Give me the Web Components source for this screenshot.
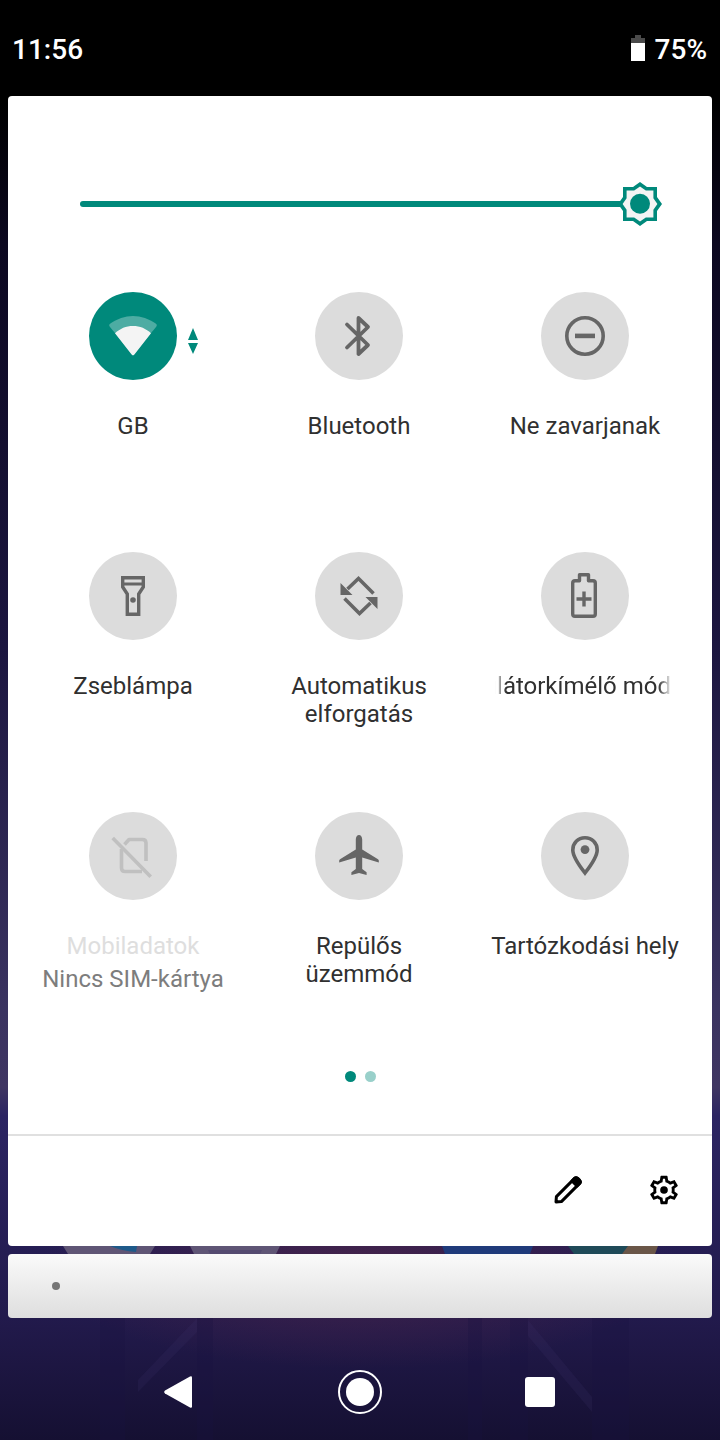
<!DOCTYPE html>
<html>
<head>
<meta charset="utf-8">
<title>Gyorsbeállítások</title>
<style>
html, body { margin: 0; height: 100%; }
body {
  width: 720px;
  height: 1440px;
  overflow: hidden;
  position: relative;
  background: #000;
  font-family: Roboto, "Noto Sans", sans-serif;
}
</style>
</head>
<body>
<qs-wallpaper></qs-wallpaper>
<qs-status time="11:56" level="75%"></qs-status>
<qs-panel>
  <qs-slider></qs-slider>
  <qs-grid>
    <qs-tile active label="GB" icon="wifi"></qs-tile>
    <qs-tile label="Bluetooth" icon="bluetooth"></qs-tile>
    <qs-tile label="Ne zavarjanak" icon="dnd"></qs-tile>
    <qs-tile label="Zseblámpa" icon="torch"></qs-tile>
    <qs-tile label="Automatikus elforgatás" icon="rotate"></qs-tile>
    <qs-tile fade label="Akkumulátorkímélő mód" icon="battery"></qs-tile>
    <qs-tile disabled label="Mobiladatok" sub="Nincs SIM-kártya" icon="nosim"></qs-tile>
    <qs-tile label="Repülős üzemmód" icon="plane"></qs-tile>
    <qs-tile label="Tartózkodási hely" icon="pin"></qs-tile>
  </qs-grid>
  <qs-dots></qs-dots>
  <qs-footer></qs-footer>
</qs-panel>
<qs-notif></qs-notif>
<qs-nav></qs-nav>

<script>
const ICONS = {
  wifi: `<svg width="48" height="48" viewBox="0 0 48 48">
    <path d="M24 43 L1 15 Q-.6 13 1 11.8 C8 6.8 16 4 24 4 C32 4 40 6.8 47 11.8 Q48.6 13 47 15 Z" fill="#fff" fill-opacity=".3"/>
    <path d="M24 43.4 Q23.2 43.4 22.6 42.6 L6 21.2 C11 16.6 17 14 24 14 C31 14 37 16.6 42 21.2 L25.4 42.6 Q24.8 43.4 24 43.4 Z" fill="#f4f4f4"/>
  </svg>`,
  bluetooth: `<svg width="48" height="48" viewBox="0 0 48 48" fill="none" stroke="#666" stroke-width="3.8" stroke-linecap="round" stroke-linejoin="round">
    <path transform="translate(-.5 0)" d="M12.5 12.5 L33.5 33 L24 42 V6 L33.5 15 L12.5 35.5"/>
  </svg>`,
  dnd: `<svg width="48" height="48" viewBox="0 0 48 48">
    <circle cx="24" cy="24" r="18.2" fill="none" stroke="#666" stroke-width="3.6"/>
    <rect x="14" y="21.6" width="20" height="4.6" fill="#666"/>
  </svg>`,
  torch: `<svg width="48" height="48" viewBox="0 0 48 48" fill="none" stroke="#666" stroke-width="3.4">
    <path d="M13.7 5.7 H34.3 V15 L29.7 22 V42.3 H18.3 V22 L13.7 15 Z"/>
    <path d="M14 12 H34" stroke-width="3"/>
    <circle cx="24" cy="28" r="2.8" fill="#666" stroke="none"/>
  </svg>`,
  rotate: `<svg width="48" height="48" viewBox="0 0 48 48" fill="none" stroke="#666" stroke-width="3.6">
    <path d="M12.5 17 L23.5 6.5 L38.5 21.5"/>
    <path d="M35.5 31 L24.5 41.5 L9.5 26.5"/>
    <path d="M5.5 11 V23 H17.5 Z M42.5 37 V25 H30.5 Z" fill="#666" stroke="none"/>
  </svg>`,
  battery: `<svg width="48" height="48" viewBox="0 0 48 48" fill="none" stroke="#666" stroke-width="3.4" stroke-linejoin="round">
    <g transform="translate(-1 0)">
      <path d="M19.5 8.7 V2.7 H28.5 V8.7 H33 Q35.3 8.7 35.3 11 V42 Q35.3 44.3 33 44.3 H15 Q12.7 44.3 12.7 42 V11 Q12.7 8.7 15 8.7 Z"/>
      <path d="M16.5 27 H31.5 M24 19.5 V34.5"/>
    </g>
  </svg>`,
  nosim: `<svg width="48" height="48" viewBox="0 0 48 48" fill="none" stroke="#c0c0c0" stroke-width="3.6" stroke-linejoin="round">
    <path d="M37 29 V11 Q37 7.5 33.5 7.5 H20 L15.5 12.5"/>
    <path d="M12.5 17 V36 Q12.5 39.5 16 39.5 H33"/>
    <path d="M3.7 6 L41.7 44.7"/>
  </svg>`,
  plane: `<svg width="48" height="48" viewBox="0 0 48 48">
    <path fill="#666" d="M24 3 C25.8 3 27.2 5 27.2 7.4 V17.6 L43 27.2 Q43.8 27.8 43.8 28.6 V30.6 L27.2 25.6 V37 L31.6 40.2 V43 L24 41 L16.4 43 V40.2 L20.8 37 V25.6 L4.2 30.6 V28.6 Q4.2 27.8 5 27.2 L20.8 17.6 V7.4 C20.8 5 22.2 3 24 3 Z"/>
  </svg>`,
  pin: `<svg width="48" height="48" viewBox="0 0 48 48">
    <path d="M24 5.8 C17 5.8 11.8 11.2 11.8 18 C11.8 25.4 19 34.6 24 41 C29 34.6 36.2 25.4 36.2 18 C36.2 11.2 31 5.8 24 5.8 Z" fill="none" stroke="#666" stroke-width="3.6"/>
    <circle cx="24" cy="17.6" r="4.4" fill="#666"/>
  </svg>`
}

class QsWallpaper extends HTMLElement {
  constructor() {
    super()
    this.attachShadow({mode: 'open'}).innerHTML = `
      <style>
        :host { position: absolute; left: 0; top: 0; width: 720px; height: 1440px; display: block; }
        svg { display: block; }
      </style>
      <svg width="720" height="1440" viewBox="0 0 720 1440">
        <defs>
          <linearGradient id="v" x1="0" y1="0" x2="0" y2="1">
            <stop offset="0" stop-color="#000"/>
            <stop offset=".07" stop-color="#000"/>
            <stop offset=".17" stop-color="#0c0820"/>
            <stop offset=".45" stop-color="#1c1640"/>
            <stop offset=".70" stop-color="#3a3360"/>
            <stop offset=".755" stop-color="#3f3562"/>
            <stop offset=".775" stop-color="#2b2462"/>
            <stop offset=".915" stop-color="#221a4c"/>
            <stop offset="1" stop-color="#151032"/>
          </linearGradient>
          <radialGradient id="warm" gradientUnits="userSpaceOnUse" cx="360" cy="1270" r="320" gradientTransform="translate(0 860) scale(1 .32)">
            <stop offset="0" stop-color="#4c2448" stop-opacity=".8"/>
            <stop offset="1" stop-color="#4c2448" stop-opacity="0"/>
          </radialGradient>
        </defs>
        <rect width="720" height="1440" fill="url(#v)"/>
        <rect y="1100" width="720" height="340" fill="url(#warm)"/>
        <path d="M63 1246 H155 L150 1254 H68 Z" fill="#5f5575"/>
        <path d="M110 1246 H137 L136 1252 Q122 1251 110 1246 Z" fill="#1e5a8a"/>
        <path d="M190 1246 H280 L276 1254 H194 Z" fill="#5f5575"/>
        <path d="M208 1250 H262 L260 1254 H210 Z" fill="#544a70"/>
        <path d="M442 1246 H533 L530 1254 H445 Z" fill="#1f3a7a"/>
        <path d="M568 1246 H630 L622 1254 H574 Z" fill="#1f4a58"/>
        <path d="M628 1246 H658 L655 1254 H622 Z" fill="#6a5648"/>
        <g fill="#181342" fill-opacity=".28">
          <rect x="100" y="1318" width="25" height="122"/>
          <rect x="197" y="1318" width="16" height="122"/>
          <rect x="468" y="1318" width="14" height="122"/>
          <rect x="510" y="1318" width="18" height="122"/>
          <rect x="592" y="1318" width="37" height="122"/>
        </g>
        <path d="M197 1318 L138 1380 V1392 L197 1332 Z M528 1320 L592 1397 V1412 L528 1336 Z" fill="#3a3468" fill-opacity=".2"/>
      </svg>`
  }
}

class QsStatus extends HTMLElement {
  constructor() {
    super()
    this.attachShadow({mode: 'open'})
  }
  connectedCallback() {
    this.shadowRoot.innerHTML = `
      <style>
        :host { position: relative; display: flex; height: 96px; padding: 0 13px 0 12px; box-sizing: border-box;
          align-items: center; justify-content: space-between; color: #fff;
          font-size: 28px; font-weight: 500; }
        .r { display: flex; align-items: center; gap: 10px; }
        span { position: relative; top: 1px; }
        svg { display: block; }
      </style>
      <span>${this.getAttribute('time')}</span>
      <div class="r">
        <svg width="14" height="26" viewBox="0 0 14 26">
          <path d="M4 0 H10 V3 H14 V26 H0 V3 H4 Z" fill="#fff"/>
          <path d="M4 0 H10 V3 H14 V8 H0 V3 H4 Z" fill="#4a4a4a"/>
        </svg>
        <span>${this.getAttribute('level')}</span>
      </div>`
  }
}

class QsPanel extends HTMLElement {
  constructor() {
    super()
    this.attachShadow({mode: 'open'}).innerHTML = `
      <style>
        :host { position: relative; display: flex; flex-direction: column; margin: 0 8px; height: 1150px;
          background: #fff; border-radius: 4px; box-sizing: border-box; }
      </style>
      <slot></slot>`
  }
}

class QsSlider extends HTMLElement {
  constructor() {
    super()
    this.attachShadow({mode: 'open'}).innerHTML = `
      <style>
        :host { display: flex; align-items: center; height: 44px; margin: 86px 50px 0 72px; }
        .track { flex: 1; height: 6px; margin-right: -2px; background: #00897b; border-radius: 3px 0 0 3px; }
        svg { display: block; flex: none; position: relative; }
      </style>
      <div class="track"></div>
      <svg width="44" height="44" viewBox="0 0 44 44">
        <path d="M22 0 L29 5 H39 V15 L44 22 L39 29 V39 H29 L22 44 L15 39 H5 V29 L0 22 L5 15 V5 H15 Z" fill="#00897b"/>
        <path d="M22 4.6 L27.8 8.6 H35.4 V16.2 L39.4 22 L35.4 27.8 V35.4 H27.8 L22 39.4 L16.2 35.4 H8.6 V27.8 L4.6 22 L8.6 16.2 V8.6 H16.2 Z" fill="#f4f4f4"/>
        <circle cx="22" cy="21.8" r="10" fill="#00897b"/>
      </svg>`
  }
}

class QsGrid extends HTMLElement {
  constructor() {
    super()
    this.attachShadow({mode: 'open'}).innerHTML = `
      <style>
        :host { display: grid; grid-template-columns: repeat(3, 226px); grid-auto-rows: 260px;
          padding: 0 14px 0 12px; margin-top: 66px; }
      </style>
      <slot></slot>`
  }
}

class QsTile extends HTMLElement {
  constructor() {
    super()
    this.attachShadow({mode: 'open'})
  }
  connectedCallback() {
    const active = this.hasAttribute('active')
    const disabled = this.hasAttribute('disabled')
    const fade = this.hasAttribute('fade')
    const sub = this.getAttribute('sub')
    this.shadowRoot.innerHTML = `
      <style>
        :host { display: flex; flex-direction: column; align-items: center; color: #303030;
          font-size: 24px; line-height: 28px; text-align: center; }
        .wrap { position: relative; width: 88px; height: 88px; flex: none; }
        .circle { width: 88px; height: 88px; border-radius: 50%; background: ${active ? '#00897b' : '#dcdcdc'};
          display: flex; align-items: center; justify-content: center; }
        .circle svg { display: block; }
        .updown { position: absolute; left: 99px; top: 36px; display: block; }
        .label { margin-top: 32px; width: 194px; color: ${disabled ? '#dedede' : '#303030'}; }
        .sub { color: #7d7d7d; width: 194px; margin-top: 5px; }
        .fade { width: 186px; display: flex; justify-content: flex-end; overflow: hidden; white-space: nowrap;
          box-sizing: border-box; padding-right: 7px;
          -webkit-mask-image: linear-gradient(90deg, transparent 3px, #000 14px, #000 166px, transparent 180px);
          mask-image: linear-gradient(90deg, transparent 3px, #000 14px, #000 166px, transparent 180px); }
        .fade span { flex: none; }
      </style>
      <div class="wrap">
        <div class="circle">${ICONS[this.getAttribute('icon')]}</div>
        ${active ? `<svg class="updown" width="10" height="26" viewBox="0 0 10 26">
          <path d="M5 0 L10 12 H0 Z M0 15 H10 L5 26 Z" fill="#00897b"/></svg>` : ''}
      </div>
      <div class="label ${fade ? 'fade' : ''}"><span>${this.getAttribute('label')}</span></div>
      ${sub ? `<div class="sub">${sub}</div>` : ''}`
  }
}

class QsDots extends HTMLElement {
  constructor() {
    super()
    this.attachShadow({mode: 'open'}).innerHTML = `
      <style>
        :host { display: flex; justify-content: center; gap: 9px; margin-top: -1px; padding-left: 1px; }
        i { display: block; width: 11px; height: 11px; border-radius: 50%; background: #00897b; }
        i + i { background: #99d0ca; }
      </style>
      <i></i><i></i>`
  }
}

class QsFooter extends HTMLElement {
  constructor() {
    super()
    this.attachShadow({mode: 'open'}).innerHTML = `
      <style>
        :host { display: flex; justify-content: flex-end; align-items: center; gap: 61px; margin-top: auto;
          height: 112px; border-top: 2px solid #e0e0e0; padding: 0 31px 2px 0; box-sizing: border-box; }
        svg { display: block; }
      </style>
      <svg width="36" height="36" viewBox="0 0 36 36" fill="none" stroke="#000" stroke-width="3" stroke-linejoin="round">
        <path d="M6 30 L6.4 24.6 L24.6 6.4 Q26 5 27.6 6.4 L29.6 8.4 Q31 10 29.6 11.4 L11.4 29.6 Z"/>
        <path d="M24.6 6.4 Q26 5 27.6 6.4 L29.6 8.4 Q31 10 29.6 11.4 L27 14 L22 9 Z" fill="#000"/>
      </svg>
      <svg width="34" height="34" viewBox="0 0 24 24">
        <path fill="#000" fill-rule="evenodd" d="M19.43 12.98c.04-.32.07-.64.07-.98s-.03-.66-.07-.98l2.11-1.65c.19-.15.24-.42.12-.64l-2-3.46c-.12-.22-.39-.3-.61-.22l-2.49 1c-.52-.4-1.08-.73-1.69-.98l-.38-2.65C14.46 2.18 14.25 2 14 2h-4c-.25 0-.46.18-.49.42l-.38 2.65c-.61.25-1.17.59-1.69.98l-2.49-1c-.23-.09-.49 0-.61.22l-2 3.46c-.13.22-.07.49.12.64l2.11 1.65c-.04.32-.07.65-.07.98s.03.66.07.98l-2.11 1.65c-.19.15-.24.42-.12.64l2 3.46c.12.22.39.3.61.22l2.49-1c.52.4 1.08.73 1.69.98l.38 2.65c.03.24.24.42.49.42h4c.25 0 .46-.18.49-.42l.38-2.65c.61-.25 1.17-.59 1.69-.98l2.49 1c.23.09.49 0 .61-.22l2-3.46c.12-.22.07-.49-.12-.64l-2.11-1.65zM17.45 11.27c.04.31.05.52.05.73 0 .21-.02.43-.05.73l-.14 1.13.89.7 1.08.84-.7 1.21-1.27-.51-1.04-.42-.9.68c-.43.32-.84.56-1.25.73l-1.06.43-.16 1.13-.2 1.35h-1.4l-.19-1.35-.16-1.13-1.06-.43c-.43-.18-.83-.41-1.23-.71l-.91-.7-1.06.43-1.27.51-.7-1.21 1.08-.84.89-.7-.14-1.13c-.03-.31-.05-.54-.05-.74s.02-.43.05-.73l.14-1.13-.89-.7-1.08-.84.7-1.21 1.27.51 1.04.42.9-.68c.43-.32.84-.56 1.25-.73l1.06-.43.16-1.13.2-1.35h1.39l.19 1.35.16 1.13 1.06.43c.43.18.83.41 1.23.71l.91.7 1.06-.43 1.27-.51.7 1.21-1.07.85-.89.7.14 1.13z"/>
        <circle cx="12" cy="12" r="2.7" fill="#000"/>
      </svg>`
  }
}

class QsNotif extends HTMLElement {
  constructor() {
    super()
    this.attachShadow({mode: 'open'}).innerHTML = `
      <style>
        :host { position: relative; display: flex; align-items: center; height: 64px; margin: 8px 8px 0;
          padding-left: 44px; border-radius: 4px; box-sizing: border-box;
          background: linear-gradient(180deg, #fafafa, #dedede); }
        i { display: block; width: 8px; height: 8px; border-radius: 50%; background: #757575; }
      </style>
      <i></i>`
  }
}

class QsNav extends HTMLElement {
  constructor() {
    super()
    this.attachShadow({mode: 'open'}).innerHTML = `
      <style>
        :host { position: relative; display: flex; align-items: center; height: 44px; margin-top: 52px; padding-left: 164px; }
        svg { display: block; flex: none; }
        .home { margin: 0 143px 0 146px; }
      </style>
      <svg width="28" height="32" viewBox="0 0 28 32"><path d="M26 .4 Q28 -.4 28 1.6 V30.4 Q28 32.4 26 31.6 L1 17.4 Q-.6 16 1 14.6 Z" fill="#fff"/></svg>
      <svg class="home" width="44" height="44" viewBox="0 0 44 44"><circle cx="22" cy="22" r="21" fill="none" stroke="#fff" stroke-width="2"/><circle cx="22" cy="22" r="14" fill="#fff"/></svg>
      <svg width="30" height="30" viewBox="0 0 30 30"><rect width="30" height="30" rx="3" fill="#fff"/></svg>`
  }
}

customElements.define('qs-wallpaper', QsWallpaper)
customElements.define('qs-status', QsStatus)
customElements.define('qs-panel', QsPanel)
customElements.define('qs-slider', QsSlider)
customElements.define('qs-grid', QsGrid)
customElements.define('qs-tile', QsTile)
customElements.define('qs-dots', QsDots)
customElements.define('qs-footer', QsFooter)
customElements.define('qs-notif', QsNotif)
customElements.define('qs-nav', QsNav)
</script>
</body>
</html>
